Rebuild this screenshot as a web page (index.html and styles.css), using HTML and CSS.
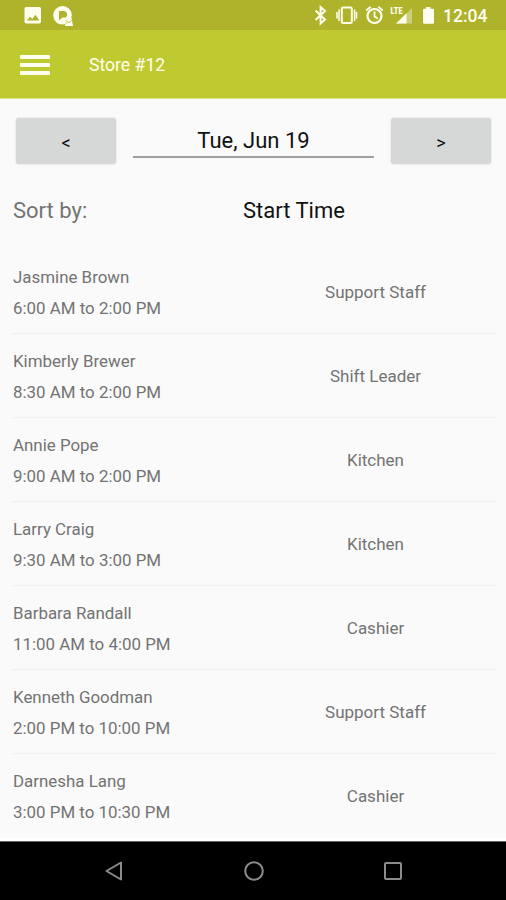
FILE: index.html
```html
<!DOCTYPE html>
<html lang="en">
<head>
<meta charset="utf-8">
<title>Store #12</title>
<link rel="stylesheet" href="styles.css">
</head>
<body>
<div class="status">
  <svg class="notifications" width="60" height="30" viewBox="20 0 60 30">
    <rect x="24.5" y="7" width="16.5" height="16.5" rx="1.8" fill="#fffff0"/>
    <path d="M27 20.500l3-4 2.200 2.500 3.200-4.300 4 5.800z" fill="#aeb32b"/>
    <circle cx="62.500" cy="15.300" r="9.300" fill="#fffff0"/>
    <path d="M59 11h5a3.700 3.700 0 0 1 1.800 6.600h-3.500L59 20.500z" fill="#aeb32b"/>
    <path d="M65 19l6.500-1 1.500 8h-8z" fill="#fffff0"/>
    <path d="M65.500 20.500l3.300 2 3-2M65 24.500l2-2" fill="none" stroke="#aeb32b" stroke-width=".8"/>
  </svg>
  <div class="system">
    <svg width="122" height="30" viewBox="314 0 122 30">
      <path d="M315.500 10.500l9.500 9-4.400 4V7l4.400 4-9.500 9" fill="none" stroke="#fffff0" stroke-width="2"/>
      <rect x="341.800" y="7.500" width="10" height="15.500" rx="1.500" fill="none" stroke="#fffff0" stroke-width="2"/>
      <path d="M339 9.500v11.500M337 12v6.500M354.600 9.500v11.500M356.600 12v6.500" stroke="#fffff0" stroke-width="1.500"/>
      <circle cx="374.500" cy="16" r="7" fill="none" stroke="#fffff0" stroke-width="2.200"/>
      <path d="M366.200 10.500l4.500-3.800M382.800 10.500l-4.500-3.800M374.500 11.500v5l3.300 2" fill="none" stroke="#fffff0" stroke-width="1.800"/>
      <path d="M412 8v15.500h-16z" fill="#cccf79"/>
      <path d="M406.500 13.300v10.200H396z" fill="#fffff0"/>
      <text class="lte" x="390.500" y="14" textLength="12" lengthAdjust="spacingAndGlyphs">LTE</text>
      <path d="M426 7h4.500v1.800h2.200q1.300 0 1.300 1.300v12.300q0 1.300-1.300 1.300h-8.400q-1.300 0-1.300-1.300V10.100q0-1.300 1.300-1.300H426z" fill="#fffff0"/>
    </svg>
    <span class="clock">12:04</span>
  </div>
</div>
<header class="appbar">
  <button class="menu" aria-label="Menu"><span></span><span></span><span></span></button>
  <h1>Store #12</h1>
</header>
<main>
  <div class="dates">
    <button class="step">&lt;</button>
    <div class="date">Tue, Jun 19</div>
    <button class="step">&gt;</button>
  </div>
  <div class="sort"><span>Sort by:</span><span class="value">Start Time</span></div>
  <ul class="shifts">
    <li><div><p class="name">Jasmine Brown</p><p>6:00 AM to 2:00 PM</p></div><span class="role">Support Staff</span></li>
    <li><div><p class="name">Kimberly Brewer</p><p>8:30 AM to 2:00 PM</p></div><span class="role">Shift Leader</span></li>
    <li><div><p class="name">Annie Pope</p><p>9:00 AM to 2:00 PM</p></div><span class="role">Kitchen</span></li>
    <li><div><p class="name">Larry Craig</p><p>9:30 AM to 3:00 PM</p></div><span class="role">Kitchen</span></li>
    <li><div><p class="name">Barbara Randall</p><p>11:00 AM to 4:00 PM</p></div><span class="role">Cashier</span></li>
    <li><div><p class="name">Kenneth Goodman</p><p>2:00 PM to 10:00 PM</p></div><span class="role">Support Staff</span></li>
    <li><div><p class="name">Darnesha Lang</p><p>3:00 PM to 10:30 PM</p></div><span class="role">Cashier</span></li>
  </ul>
</main>
<nav class="navbar">
  <svg width="20" height="20" viewBox="0 0 20 20"><path d="M17 1.500v17L2.500 10z"/></svg>
  <svg width="20" height="20" viewBox="0 0 20 20"><circle cx="10" cy="10" r="8.800"/></svg>
  <svg width="20" height="20" viewBox="0 0 20 20"><rect x="2" y="2" width="16" height="16" rx="1"/></svg>
</nav>
</body>
</html>
```
FILE: styles.css
```css
* { box-sizing: border-box; }
body {
  margin: 0;
  width: 506px;
  height: 900px;
  overflow: hidden;
  display: flex;
  flex-direction: column;
  background: #fafafa;
  color: #737373;
  font-family: Roboto, "Liberation Sans", sans-serif;
}
h1, p, ul { margin: 0; padding: 0; }
button { border: 0; padding: 0; font: inherit; }
svg { display: block; }

.status {
  flex: none;
  height: 30px;
  padding: 0 18px 0 20px;
  display: flex;
  justify-content: space-between;
  background: #aeb32b;
}
.system { display: flex; }
.clock {
  width: 52px;
  padding-left: 7px;
  line-height: 32px;
  font-size: 17.5px;
  font-weight: 500;
  color: #fffff0;
  white-space: nowrap;
}
.lte { font-size: 9px; font-weight: 900; fill: #fffff0; }

.appbar {
  flex: none;
  height: 69px;
  padding: 2px 20px 0;
  display: flex;
  align-items: center;
  gap: 39px;
  background: #bfca31;
  border-bottom: 1px solid #dfe58f;
}
.menu {
  width: 30px;
  display: flex;
  flex-direction: column;
  gap: 4px;
  background: none;
}
.menu span { height: 4px; border-radius: 1px; background: #fffff0; }
.appbar h1 { font-size: 17.6px; font-weight: 400; color: #fffff0; line-height: 20px; }

main { flex: 1; border-bottom: 3px solid #fff; }
.dates {
  height: 84px;
  padding: 19px 15px 0 16px;
  display: flex;
  gap: 17px;
}
.step {
  width: 100px;
  height: 46px;
  padding-top: 2px;
  border-radius: 3px;
  background: #d6d8d7;
  box-shadow: 0 0 2px #d0d0d0;
  color: #111;
  font-size: 18px;
}
.date {
  flex: 1;
  height: 40px;
  border-bottom: 2px solid #a0a0a0;
  text-align: center;
  font-size: 22px;
  line-height: 45px;
  color: #111;
}
.sort {
  height: 67px;
  padding: 12px 13px 0;
  display: grid;
  grid-template-columns: 230px 1fr;
  font-size: 22px;
  line-height: 32px;
}
.sort .value { color: #111; }

.shifts { list-style: none; padding: 0 10px 0 12px; }
.shifts li {
  height: 84px;
  padding: 12px 0 0 1px;
  display: grid;
  grid-template-columns: 242px 1fr;
  border-bottom: 1px solid #f0f0f0;
  font-size: 16.9px;
  line-height: 30px;
}
.shifts li:last-child { border-bottom-color: transparent; }
.name { margin-bottom: 1px; }
.shifts .role { text-align: center; font-size: 17px; line-height: 60px; }

.navbar {
  flex: none;
  height: 59px;
  padding: 0 103px 0 104px;
  display: flex;
  align-items: center;
  justify-content: space-between;
  background: #000;
  border-top: 1px solid #666;
}
.navbar svg { fill: none; stroke: #8c8c8c; stroke-width: 2; stroke-linejoin: round; }
```
